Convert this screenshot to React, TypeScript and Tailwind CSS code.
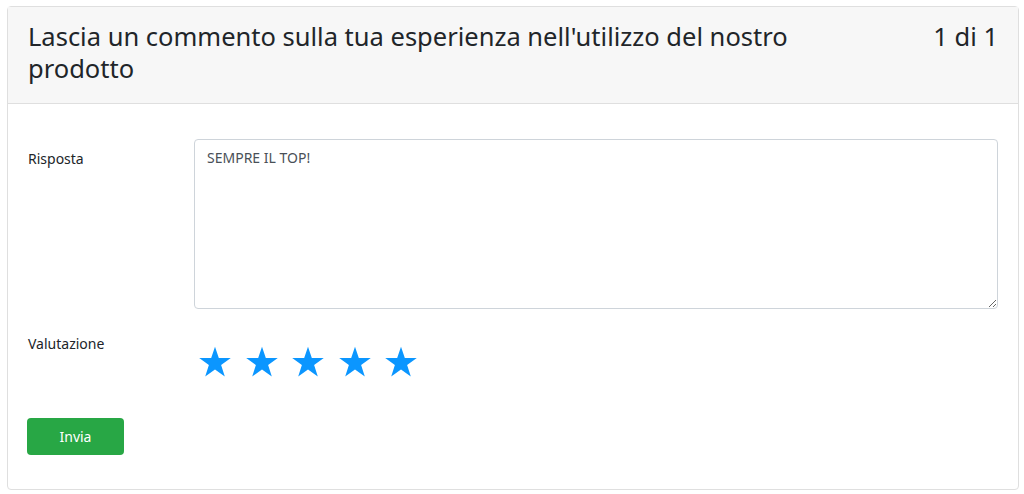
import React from "react";

const Star: React.FC = () => (
  <svg viewBox="0 0 24 24" className="h-[35px] w-[36px]" fill="#0b96ff">
    <path d="M12 1.2l2.62 7.77h8.2l-6.63 4.82 2.53 7.8L12 16.77l-6.72 4.82 2.53-7.8L1.18 8.97h8.2z" />
  </svg>
);

const App: React.FC = () => {
  return (
    <div className="min-h-[494px] bg-white pl-[7px] pr-[5px] pt-[6px] pb-[4px] font-['Noto_Sans','Open_Sans',sans-serif] text-[#212529]">
      <div className="rounded-[4px] border border-[#dfdfdf] bg-white">
        {/* header */}
        <div className="flex justify-between border-b border-[#dfdfdf] bg-[#f7f7f7] px-5 pt-[13px] pb-[19px]">
          <h3 className="w-[800px] text-[25.5px] leading-[32px] font-normal">
            Lascia un commento sulla tua esperienza nell'utilizzo del nostro prodotto
          </h3>
          <div className="text-[25.5px] leading-[32px]">1 di 1</div>
        </div>

        {/* body */}
        <div className="px-5 pt-[35px] pb-[34px]">
          <div className="flex">
            <label className="w-[166px] shrink-0 pt-[10px] text-[14px] leading-[20px]">Risposta</label>
            <textarea
              className="h-[170px] flex-1 resize-y rounded-[4px] border border-[#ced4da] px-3 py-[8px] text-[14px] leading-[20px] text-[#495057] outline-none"
              defaultValue="SEMPRE IL TOP!"
            />
          </div>

          <div className="mt-[25px] flex">
            <label className="w-[166px] shrink-0 text-[14px] leading-[20px]">Valutazione</label>
            <div className="mt-[11px] flex gap-[10.5px] pl-[3px]">
              <Star />
              <Star />
              <Star />
              <Star />
              <Star />
            </div>
          </div>

          <button className="-ml-px mt-[38px] h-[37px] w-[97px] rounded-[4px] bg-[#28a745] text-[14px] text-white">
            Invia
          </button>
        </div>
      </div>
    </div>
  );
};

export default App;
